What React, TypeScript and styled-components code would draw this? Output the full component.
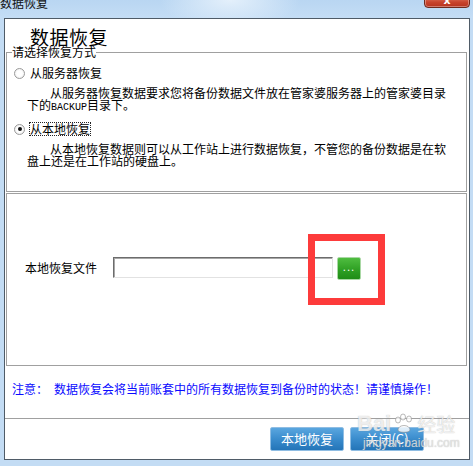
import React from "react";
import styled, { createGlobalStyle } from "styled-components";

const GlobalStyle = createGlobalStyle`
  html, body { margin: 0; padding: 0; background: #c3dcf4; }
  body { font-family: "Noto Sans CJK SC", "Noto Sans", sans-serif; font-size: 12px; color: #000; }
  * { box-sizing: border-box; }
`;

const Window = styled.div`
  width: 473px;
  height: 466px;
  display: flex;
  flex-direction: column;
  padding-bottom: 6px;
  background: #c3dcf4;
  overflow: hidden;
  position: relative;
`;

const TitleBar = styled.div`
  height: 18px;
  flex: none;
  display: flex;
  justify-content: space-between;
  align-items: flex-start;
  background: radial-gradient(ellipse 70px 30px at 230px 0px, #e4f0fb 0%, rgba(228,240,251,0) 100%),
    linear-gradient(#b9d6f2, #c4ddf5);
`;

const TitleText = styled.span`
  font-size: 12px;
  line-height: 12px;
  margin-top: -3px;
  color: #111;
`;

const CloseBtn = styled.div`
  width: 46px;
  height: 14px;
  margin-top: -6px;
  margin-right: 3px;
  border: 1px solid #6f2a1e;
  border-radius: 0 0 4px 4px;
  background: linear-gradient(#e58b77, #c8432c 60%, #b7331f);
  color: #fff;
  font: bold 11px/12px "DejaVu Sans", sans-serif;
  text-align: center;
  box-shadow: inset 0 0 0 1px rgba(255,255,255,0.35);
`;

const Client = styled.div`
  flex: 1;
  margin: 0 3px 0 4px;
  border: 1px solid #4f5b67;
  background: #fff;
  display: flex;
  flex-direction: column;
`;

const Header = styled.div`
  height: 26px;
  flex: none;
`;

const BigTitle = styled.div`
  padding: 8px 0 0 25px;
  font-size: 19px;
  line-height: 20px;
  letter-spacing: 0.5px;
`;

const Group = styled.fieldset`
  margin: 0 2px 0 1px;
  padding: 0;
  height: 147px;
  flex: none;
  border: 1px solid #a0a0a0;
  min-width: 0;
`;

const Legend = styled.legend`
  margin-left: 5px;
  padding: 0;
  font-size: 12px;
  line-height: 14px;
`;

const RadioRow = styled.div<{ $top: number }>`
  display: flex;
  align-items: center;
  height: 14px;
  margin-top: ${(p) => p.$top}px;
  padding-left: 7px;
`;

const RadioCircle = styled.span<{ $checked?: boolean }>`
  width: 11px;
  height: 11px;
  border-radius: 50%;
  border: 1px solid #9a9a9a;
  background: radial-gradient(circle at 50% 50%, #ffffff 0%, #ffffff 40%, #e6e6e6 100%);
  display: flex;
  align-items: center;
  justify-content: center;
  flex: none;
  &::after {
    content: "";
    display: ${(p) => (p.$checked ? "block" : "none")};
    width: 4px;
    height: 4px;
    border-radius: 50%;
    background: #111;
  }
`;

const RadioLabel = styled.span<{ $focused?: boolean }>`
  margin-left: 4px;
  padding: 0 0 0 0;
  border: 1px dotted ${(p) => (p.$focused ? "#222" : "transparent")};
  line-height: 12px;
  font-size: 12px;
`;

const Desc = styled.div<{ $top: number }>`
  margin: ${(p) => p.$top}px 0 0 20px;
  font-size: 12px;
  line-height: 12px;
  white-space: nowrap;
`;

const Indent = styled.span`
  display: inline-block;
  width: 23px;
`;

const Mono = styled.span`
  font-family: "Liberation Mono", monospace;
  font-size: 10px;
  letter-spacing: 0;
`;

const FilePanel = styled.div`
  margin: 1px 2px 0 1px;
  height: 173px;
  flex: none;
  border: 1px solid #a0a0a0;
  position: relative;
  display: flex;
  align-items: flex-start;
  padding: 63px 0 0 18px;
`;

const FieldLabel = styled.span`
  font-size: 12px;
  line-height: 21px;
  width: 88px;
  flex: none;
`;

const PathInput = styled.div`
  width: 220px;
  height: 21px;
  border: 1px solid;
  border-color: #6c6c6c #e2e2e2 #e2e2e2 #6c6c6c;
  box-shadow: inset 1px 1px 0 #a8a8a8;
  background: #fff;
  flex: none;
`;

const BrowseBtn = styled.div`
  width: 24px;
  height: 23px;
  margin-left: 4px;
  border: 1px solid #a9d8a4;
  border-radius: 2px;
  background: linear-gradient(#4fbd40, #2d9e22 60%, #1f8c16);
  color: #fff;
  font: 10px/14px "DejaVu Sans", sans-serif;
  letter-spacing: 1px;
  text-align: center;
  padding-top: 3px;
  flex: none;
`;

const Highlight = styled.div`
  position: absolute;
  left: 301px;
  top: 40px;
  width: 77px;
  height: 71px;
  border: 7px solid #fd3b3b;
`;

const Notice = styled.div`
  height: 52px;
  flex: none;
  padding: 16px 0 0 7px;
  font-size: 12px;
  line-height: 14px;
  color: #0a0aff;
  display: flex;
`;

const NoticeHead = styled.span`
  width: 42px;
  flex: none;
`;

const Footer = styled.div`
  flex: 1;
  border-top: 1px solid #a0a0a0;
  display: flex;
  justify-content: flex-end;
  align-items: flex-start;
  gap: 6px;
  padding: 8px 45px 0 0;
  position: relative;
`;

const ActionBtn = styled.div`
  width: 74px;
  height: 24px;
  border: 1px solid #8fbde3;
  border-radius: 2px;
  background: linear-gradient(#5aa6df, #3a8ccd 50%, #2475b8);
  color: #fff;
  font-size: 13px;
  line-height: 22px;
  text-align: center;
`;

const Watermark = styled.div`
  position: absolute;
  left: 352px;
  top: -8px;
  display: flex;
  flex-direction: column;
  align-items: flex-start;
  color: rgba(255, 255, 255, 0.75);
  text-shadow: 0 0 1px rgba(120, 120, 120, 0.55);
  pointer-events: none;
`;

const WmTop = styled.div`
  display: flex;
  align-items: center;
  font: bold 22px/26px "Liberation Sans", sans-serif;
  gap: 2px;
`;

const WmCn = styled.span`
  font: 19px/26px "Noto Sans CJK SC", sans-serif;
`;

const WmUrl = styled.div`
  font: 12px/13px "Liberation Sans", sans-serif;
  margin-left: 6px;
  color: rgba(235, 235, 235, 0.8);
`;

export default function App() {
  return (
    <>
      <GlobalStyle />
      <Window>
        <TitleBar>
          <TitleText>数据恢复</TitleText>
          <CloseBtn>x</CloseBtn>
        </TitleBar>
        <Client>
          <Header>
            <BigTitle>数据恢复</BigTitle>
          </Header>
          <Group>
            <Legend>请选择恢复方式</Legend>
            <RadioRow $top={7}>
              <RadioCircle />
              <RadioLabel>从服务器恢复</RadioLabel>
            </RadioRow>
            <Desc $top={7}>
              <Indent />从服务器恢复数据要求您将备份数据文件放在管家婆服务器上的管家婆目录
              <br />
              下的<Mono>BACKUP</Mono>目录下。
            </Desc>
            <RadioRow $top={8}>
              <RadioCircle $checked />
              <RadioLabel $focused>从本地恢复</RadioLabel>
            </RadioRow>
            <Desc $top={7}>
              <Indent />从本地恢复数据则可以从工作站上进行数据恢复，不管您的备份数据是在软
              <br />
              盘上还是在工作站的硬盘上。
            </Desc>
          </Group>
          <FilePanel>
            <FieldLabel>本地恢复文件</FieldLabel>
            <PathInput />
            <BrowseBtn>...</BrowseBtn>
            <Highlight />
          </FilePanel>
          <Notice>
            <NoticeHead>注意：</NoticeHead>
            <span>数据恢复会将当前账套中的所有数据恢复到备份时的状态！请谨慎操作！</span>
          </Notice>
          <Footer>
            <ActionBtn>本地恢复</ActionBtn>
            <ActionBtn>关闭(C)</ActionBtn>
            <Watermark>
              <WmTop>
                <span>Bai</span>
                <svg width="22" height="22" viewBox="0 0 22 22">
                  <g fill="rgba(255,255,255,0.8)" stroke="rgba(140,140,140,0.6)" strokeWidth="1">
                    <ellipse cx="5" cy="7" rx="2.5" ry="3" />
                    <ellipse cx="10" cy="4" rx="2.5" ry="3" />
                    <ellipse cx="16" cy="6" rx="2.5" ry="3" />
                    <path d="M5 17 C5 11 17 11 17 17 C17 20 5 20 5 17 Z" />
                  </g>
                </svg>
                <WmCn>经验</WmCn>
              </WmTop>
              <WmUrl>jingyan.baidu.com</WmUrl>
            </Watermark>
          </Footer>
        </Client>
      </Window>
    </>
  );
}
